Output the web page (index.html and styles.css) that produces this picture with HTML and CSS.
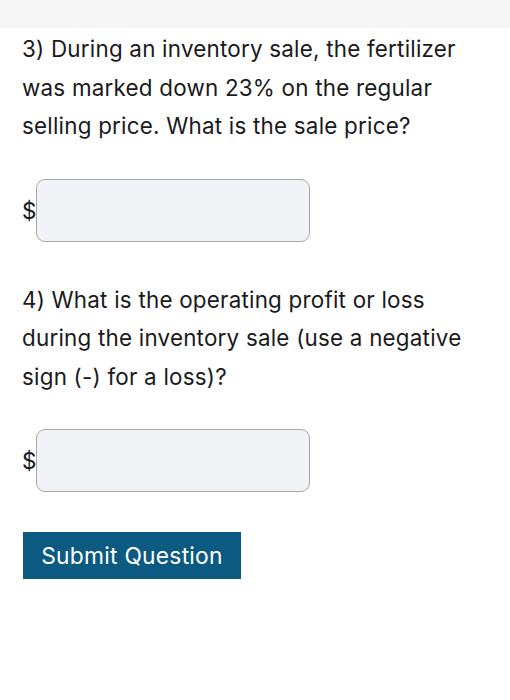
FILE: index.html
```html
<!DOCTYPE html>
<html>
<head>
<meta charset="utf-8">
<link rel="stylesheet" href="styles.css">
</head>
<body>
<div class="topbar"></div>
<main class="content">
  <section class="question">
    <p class="prompt">3) During an inventory sale, the fertilizer was marked down 23% on the regular selling price. What is the sale price?</p>
    <div class="answer">
      <span class="currency">$</span>
      <input class="field" type="text">
    </div>
  </section>
  <section class="question q4">
    <p class="prompt">4) What is the operating profit or loss during the inventory sale (use a negative sign (-) for a loss)?</p>
    <div class="answer">
      <span class="currency">$</span>
      <input class="field" type="text">
    </div>
  </section>
  <button class="submit" type="button">Submit Question</button>
</main>
</body>
</html>
```
FILE: styles.css
```css
html, body {
  margin: 0;
  padding: 0;
  background: #ffffff;
}
body {
  font-family: Inter, "Liberation Sans", sans-serif;
  color: #1a1a1c;
}
.topbar {
  height: 28px;
  background: #f6f6f6;
}
.content {
  padding: 0 22px;
  display: flex;
  flex-direction: column;
  align-items: flex-start;
}
.question {
  width: 100%;
}
.prompt {
  margin: 0;
  padding-top: 2px;
  font-size: 22.4px;
  letter-spacing: 0.22px;
  line-height: 38.5px;
  max-width: 448px;
}
.answer {
  display: flex;
  align-items: center;
  margin-top: 33px;
}
.currency {
  font-size: 22.5px;
  width: 14px;
}
.field {
  box-sizing: border-box;
  width: 274px;
  height: 63px;
  border: 1.5px solid #a7a7aa;
  border-radius: 9px;
  background: #f2f3f7;
  margin: 0;
}
.q4 {
  margin-top: 37px;
}
.submit {
  margin-top: 40px;
  margin-left: 1px;
  width: 218px;
  height: 47px;
  background: #0c5a82;
  color: #ffffff;
  border: none;
  border-radius: 0;
  font-family: Inter, "Liberation Sans", sans-serif;
  font-size: 22.8px;
  letter-spacing: 0.25px;
  padding: 0;
}
```
